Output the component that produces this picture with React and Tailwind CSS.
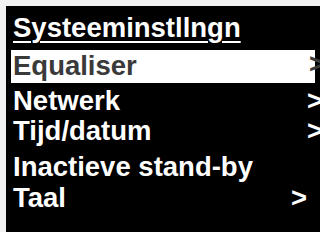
const ROWS = [
  { label: 'Netwerk', mt: 'mt-[2px]', arrow: 'mr-[-10px]' },
  { label: 'Tijd/datum', mt: 'mt-[-1px]', arrow: 'mr-[-10px]' },
  { label: 'Inactieve stand-by', mt: 'mt-[5px]', arrow: null },
  { label: 'Taal', mt: 'mt-0', arrow: 'mr-[6px]' },
]

export default function App() {
  return (
    <div className="w-[320px] h-[232px] bg-[#f1f1f1] pl-[6px] pt-[6px] overflow-hidden">
      <div
        className="w-full h-full bg-black overflow-hidden flex flex-col font-bold text-[27.5px] leading-[31px] text-white"
        style={{ fontFamily: '"Liberation Sans", Arial, sans-serif' }}
      >
        {/* Title */}
        <div className="mt-[6px] pl-[7px]">
          <span className="underline decoration-2 underline-offset-[4px]">Systeeminstllngn</span>
        </div>

        {/* Selected item */}
        <div className="mt-[7px] mx-[5px] h-[33px] bg-white px-[2px] flex items-start text-[#3a3a3a]">
          <span>Equaliser</span>
          <span className="ml-auto mr-[-12px] w-[16px] mt-[-2px]">&gt;</span>
        </div>

        {ROWS.map(r => (
          <div key={r.label} className={`${r.mt} mx-[5px] px-[2px] flex`}>
            <span>{r.label}</span>
            {r.arrow && <span className={`ml-auto w-[16px] ${r.arrow}`}>&gt;</span>}
          </div>
        ))}
      </div>
    </div>
  )
}
